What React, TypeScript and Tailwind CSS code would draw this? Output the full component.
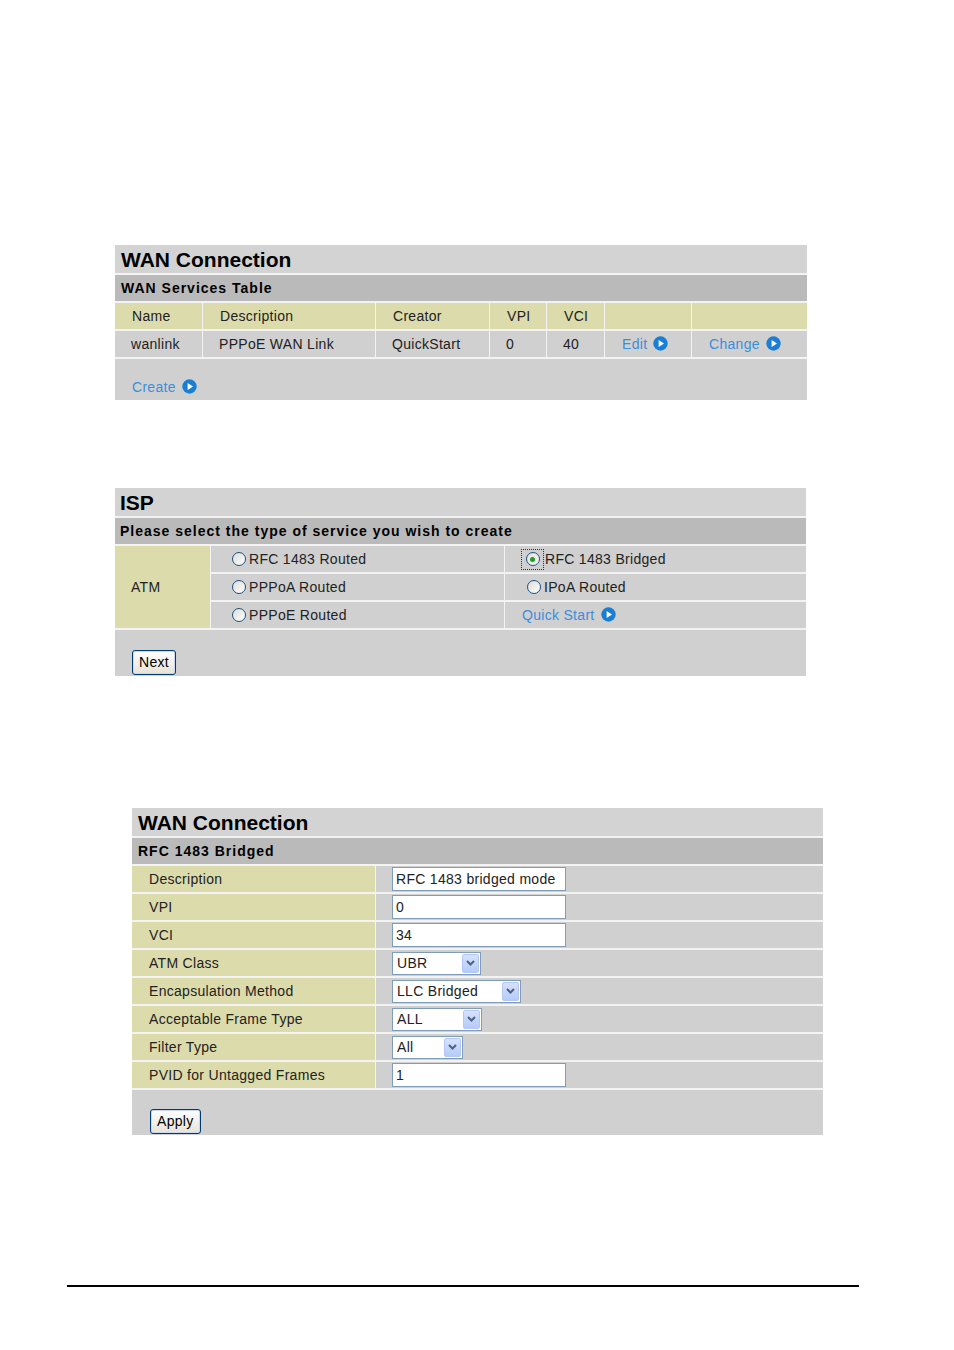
import React from 'react'

const font = { fontFamily: '"Liberation Sans", Arial, sans-serif' }

function Go() {
  return (
    <svg width="15" height="15" viewBox="0 0 15 15" className="inline-block ml-[6px] align-[-2px]">
      <circle cx="7.5" cy="7.5" r="7.2" fill="#1a7fd4" />
      <path d="M5.6 3.9 L11 7.5 L5.6 11.1 Z" fill="#fff" />
    </svg>
  )
}

function LinkText({ children }: { children: React.ReactNode }) {
  return (
    <span className="text-[#3b8edb] text-[14px] tracking-[0.3px] whitespace-nowrap">
      {children}
      <Go />
    </span>
  )
}

function Radio({ checked }: { checked?: boolean }) {
  return (
    <span className="inline-flex items-center justify-center w-[14px] h-[14px] rounded-full border border-[#1c5180] bg-gradient-to-br from-[#dcdcd7] to-white shrink-0">
      {checked && <span className="w-[5px] h-[5px] rounded-full bg-[#21a121]" />}
    </span>
  )
}

function RadioOption({ label, checked }: { label: string; checked?: boolean }) {
  return (
    <span className="flex items-center">
      {checked ? (
        <span className="flex items-center justify-center w-[23px] h-[21px] border border-dotted border-[#333] mr-[1px]">
          <Radio checked />
        </span>
      ) : (
        <span className="flex items-center pl-[6px] pr-[3px]">
          <Radio />
        </span>
      )}
      <span>{label}</span>
    </span>
  )
}

function TextBox({ value }: { value: string }) {
  return (
    <span className="flex items-center w-[174px] h-[24px] border border-[#7f9db9] bg-white pl-[3px] text-[14px] leading-none">
      {value}
    </span>
  )
}

function Select({ value, width }: { value: string; width: string }) {
  return (
    <span className={'flex items-center justify-between h-[23px] border border-[#7f9db9] bg-white pl-[4px] pr-[1px] ' + width}>
      <span>{value}</span>
      <span className="flex items-center justify-center w-[17px] h-[19px] rounded-[2px] border border-[#b5c8f5] bg-gradient-to-b from-[#d6e1fd] to-[#b5cbf7]">
        <svg width="9" height="6" viewBox="0 0 9 6">
          <path d="M1 1 L4.5 4.5 L8 1" stroke="#4d6185" strokeWidth="2" fill="none" />
        </svg>
      </span>
    </span>
  )
}

function XpButton({ label }: { label: string }) {
  return (
    <span className="inline-flex items-center justify-center h-[25px] px-[6px] rounded-[3px] border border-[#003c74] bg-gradient-to-b from-white to-[#e6e3d6] shadow-[inset_0_0_0_1px_#c8d7f5] text-[14px] text-black">
      {label}
    </span>
  )
}

function Title({ children }: { children: React.ReactNode }) {
  return (
    <div className="h-[28px] bg-[#d3d3d3] flex items-center text-[21px] font-bold text-black leading-none tracking-normal">
      {children}
    </div>
  )
}

function Subtitle({ children }: { children: React.ReactNode }) {
  return (
    <div className="h-[26px] bg-[#bababa] flex items-center text-[14px] font-bold tracking-[1px] text-black">
      {children}
    </div>
  )
}

export default function App() {
  const fields: { label: string; control: React.ReactNode }[] = [
    { label: 'Description', control: <TextBox value="RFC 1483 bridged mode" /> },
    { label: 'VPI', control: <TextBox value="0" /> },
    { label: 'VCI', control: <TextBox value="34" /> },
    { label: 'ATM Class', control: <Select value="UBR" width="w-[89px]" /> },
    { label: 'Encapsulation Method', control: <Select value="LLC Bridged" width="w-[129px]" /> },
    { label: 'Acceptable Frame Type', control: <Select value="ALL" width="w-[90px]" /> },
    { label: 'Filter Type', control: <Select value="All" width="w-[71px]" /> },
    { label: 'PVID for Untagged Frames', control: <TextBox value="1" /> },
  ]

  return (
    <div className="w-[954px] h-[1350px] bg-white pt-[245px] text-[14px] text-[#222] tracking-[0.3px]" style={font}>
      {/* WAN services table */}
      <div className="ml-[115px] w-[692px] flex flex-col gap-[2px] bg-[#f3f3f3]">
        <Title><span className="pl-[6px]">WAN Connection</span></Title>
        <Subtitle><span className="pl-[6px]">WAN Services Table</span></Subtitle>
        <div className="grid grid-cols-[87px_172px_113px_56px_57px_86px_1fr] gap-x-[1px] gap-y-[2px]">
          {['Name', 'Description', 'Creator', 'VPI', 'VCI', '', ''].map((h, i) => (
            <div key={'h' + i} className="h-[26px] bg-[#dcdbab] flex items-center pl-[17px]">{h}</div>
          ))}
          {['wanlink', 'PPPoE WAN Link', 'QuickStart', '0', '40'].map((d, i) => (
            <div key={'d' + i} className="h-[26px] bg-[#d0d0d0] flex items-center pl-[16px]">{d}</div>
          ))}
          <div className="h-[26px] bg-[#d0d0d0] flex items-center pl-[17px]"><LinkText>Edit</LinkText></div>
          <div className="h-[26px] bg-[#d0d0d0] flex items-center pl-[17px]"><LinkText>Change</LinkText></div>
        </div>
        <div className="h-[41px] bg-[#d0d0d0] flex items-end pl-[17px] pb-[2px]">
          <LinkText>Create</LinkText>
        </div>
      </div>

      {/* ISP service type */}
      <div className="mt-[88px] ml-[115px] w-[691px] flex flex-col gap-[2px] bg-[#f3f3f3]">
        <Title><span className="pl-[5px]">ISP</span></Title>
        <Subtitle><span className="pl-[5px]">Please select the type of service you wish to create</span></Subtitle>
        <div className="grid grid-cols-[95px_293px_1fr] gap-x-[1px] gap-y-[2px]">
          <div className="row-span-3 bg-[#dcdbab] flex items-center pl-[16px]">ATM</div>
          <div className="h-[26px] bg-[#d0d0d0] flex items-center pl-[15px]"><RadioOption label="RFC 1483 Routed" /></div>
          <div className="h-[26px] bg-[#d0d0d0] flex items-center pl-[16px]"><RadioOption label="RFC 1483 Bridged" checked /></div>
          <div className="h-[26px] bg-[#d0d0d0] flex items-center pl-[15px]"><RadioOption label="PPPoA Routed" /></div>
          <div className="h-[26px] bg-[#d0d0d0] flex items-center pl-[16px]"><RadioOption label="IPoA Routed" /></div>
          <div className="h-[26px] bg-[#d0d0d0] flex items-center pl-[15px]"><RadioOption label="PPPoE Routed" /></div>
          <div className="h-[26px] bg-[#d0d0d0] flex items-center pl-[17px]"><LinkText>Quick Start</LinkText></div>
        </div>
        <div className="h-[46px] bg-[#d0d0d0] flex items-end pl-[17px] pb-[1px]">
          <XpButton label="Next" />
        </div>
      </div>

      {/* RFC 1483 bridged settings */}
      <div className="mt-[132px] ml-[132px] w-[691px] flex flex-col gap-[2px] bg-[#f3f3f3]">
        <Title><span className="pl-[6px]">WAN Connection</span></Title>
        <Subtitle><span className="pl-[6px]">RFC 1483 Bridged</span></Subtitle>
        <div className="grid grid-cols-[243px_1fr] gap-x-[1px] gap-y-[2px]">
          {fields.map((f) => (
            <React.Fragment key={f.label}>
              <div className="h-[26px] bg-[#dcdbab] flex items-center pl-[17px]">{f.label}</div>
              <div className="h-[26px] bg-[#d0d0d0] flex items-center pl-[16px]">{f.control}</div>
            </React.Fragment>
          ))}
        </div>
        <div className="h-[45px] bg-[#d0d0d0] flex items-end pl-[18px] pb-[1px]">
          <XpButton label="Apply" />
        </div>
      </div>

      <div className="mt-[150px] ml-[67px] w-[792px] h-[2px] bg-black" />
    </div>
  )
}
